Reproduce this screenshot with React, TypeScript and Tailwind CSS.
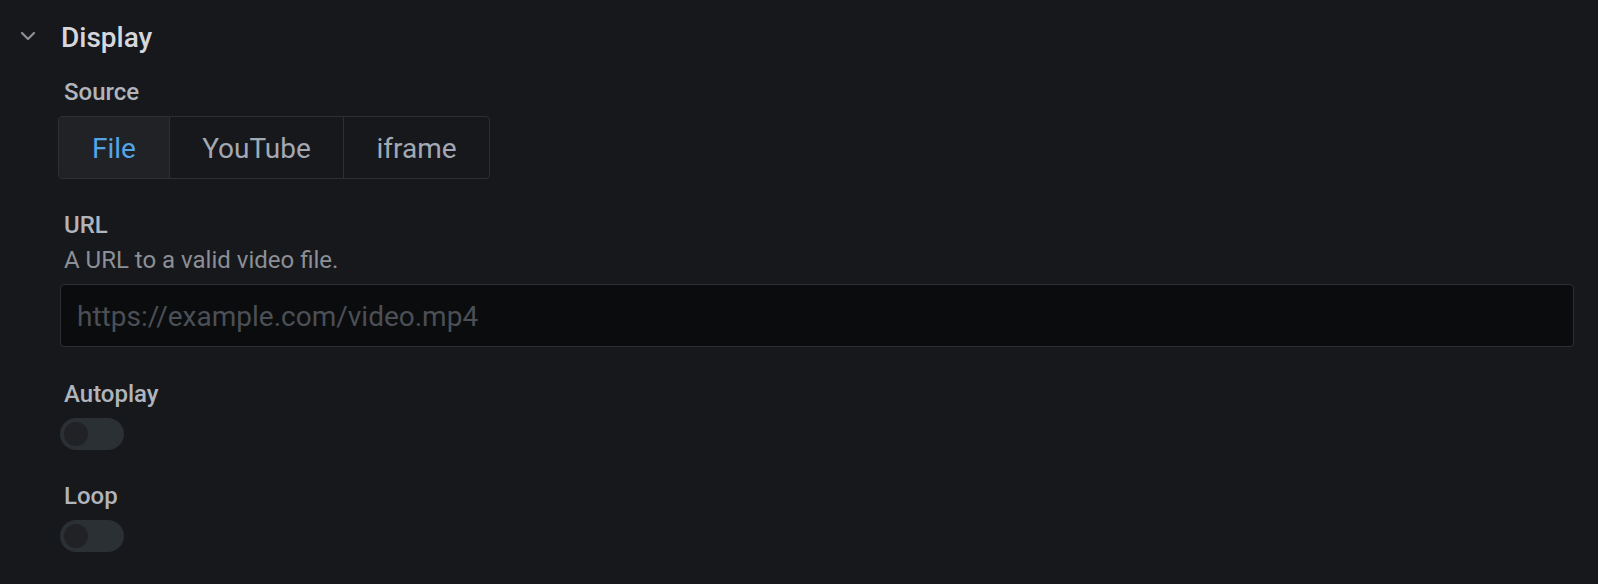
import React from "react";

function Label({ children }: { children: React.ReactNode }) {
  return (
    <div className="pl-[4px] text-[24px] leading-[30px] font-medium text-[#b0b5bd]">
      {children}
    </div>
  );
}

function Toggle() {
  return (
    <div className="w-[64px] h-[32px] rounded-full bg-[#2b3034] flex items-center pl-[4px]">
      <div className="w-[24px] h-[24px] rounded-full bg-[#202226]" />
    </div>
  );
}

export default function App() {
  return (
    <div
      className="w-[1598px] h-[584px] bg-[#17181c] overflow-hidden"
      style={{ fontFamily: "Roboto, 'Liberation Sans', sans-serif" }}
    >
      <div className="pt-[18px] flex items-center">
        <div className="w-[60px] flex justify-center">
          <svg
            width="16"
            height="10"
            viewBox="0 0 16 10"
            className="mb-[4px] mr-[4px]"
            fill="none"
          >
            <polyline
              points="2,2 8,8 14,2"
              stroke="#8e9096"
              strokeWidth="2.2"
              strokeLinecap="round"
              strokeLinejoin="round"
            />
          </svg>
        </div>
        <div className="text-[28px] leading-[40px] font-medium text-[#d5d7dc] ml-[1px]">
          Display
        </div>
      </div>

      <div className="pl-[60px] pr-[24px]">
        <div className="mt-[19px]">
          <Label>Source</Label>
        </div>
        <div className="mt-[9px] -ml-[2px] flex w-[432px] h-[63px] rounded-[4px] border border-[#2c3035] overflow-hidden text-[28px]">
          <div className="w-[110px] flex items-center justify-center pt-[2px] bg-[#202226] text-[#55a5e6]">
            File
          </div>
          <div className="w-[174px] flex items-center justify-center pt-[2px] border-l border-[#2c3035] text-[#a3a9b3]">
            YouTube
          </div>
          <div className="w-[146px] flex items-center justify-center pt-[2px] border-l border-[#2c3035] text-[#a3a9b3]">
            iframe
          </div>
        </div>

        <div className="mt-[31px]">
          <Label>URL</Label>
        </div>
        <div className="mt-[5px] pl-[4px] text-[24px] leading-[30px] text-[#8c8f96]">
          A URL to a valid video file.
        </div>
        <div className="mt-[9px] h-[63px] rounded-[4px] border border-[#2c3035] bg-[#0b0c0e] flex items-center pl-[16px] pt-[3px] text-[28px] text-[#4b4f56]">
          https://example.com/video.mp4
        </div>

        <div className="mt-[32px]">
          <Label>Autoplay</Label>
        </div>
        <div className="mt-[9px]">
          <Toggle />
        </div>

        <div className="mt-[31px]">
          <Label>Loop</Label>
        </div>
        <div className="mt-[9px]">
          <Toggle />
        </div>
      </div>
    </div>
  );
}
